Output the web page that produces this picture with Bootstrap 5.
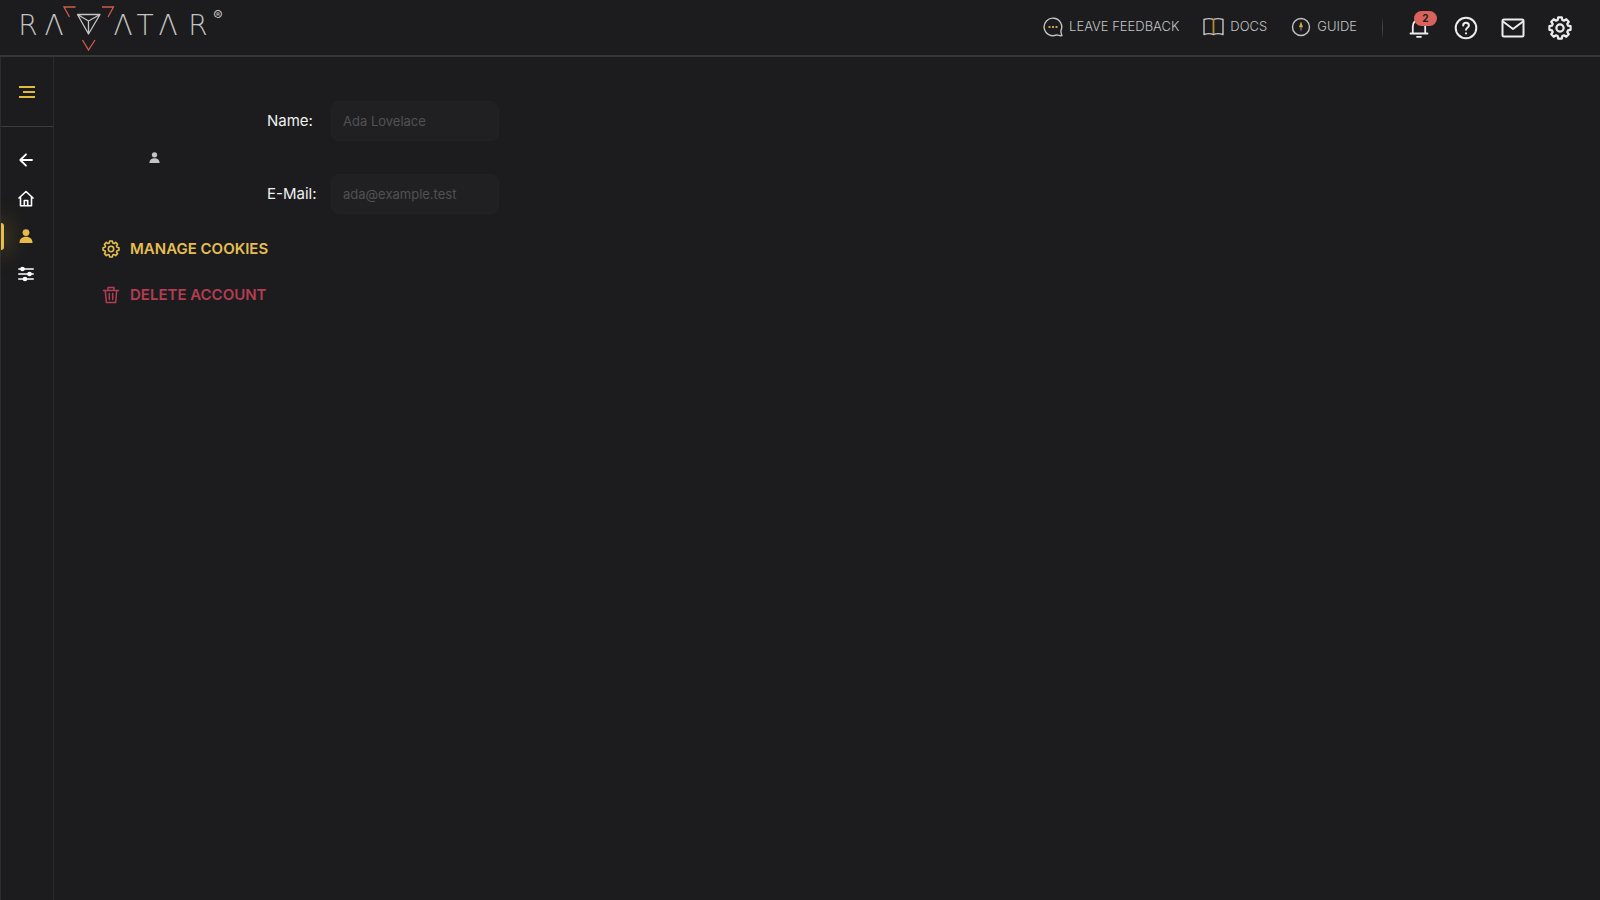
<!DOCTYPE html>
<html lang="en">
<head>
<meta charset="utf-8">
<meta name="viewport" content="width=device-width, initial-scale=1">
<title>Ravatar – Account</title>
<link href="https://cdn.jsdelivr.net/npm/bootstrap@5.3.0/dist/css/bootstrap.min.css" rel="stylesheet">
<style>
  body { background: #1c1c1e; color: #f0f0f0; font-family: Inter, "Liberation Sans", sans-serif; font-size: 15px; }
  svg { display: block; fill: none; stroke: currentColor; flex: none; }
  .topbar { height: 57px; padding: 0 28px 0 16px; border-bottom: 2px solid #373736; }
  .wordmark text { fill: #c4c4c4; stroke: none; font-family: "DejaVu Sans Light", "DejaVu Sans", sans-serif; font-size: 28px; font-weight: 200; text-anchor: middle; }
  .wordmark .reg { font-family: Inter, sans-serif; font-size: 14px; font-weight: 400; }
  .doclink { color: #c4c4c4; font-size: 13px; font-weight: 300; gap: 6px; }
  .docs { gap: 24px; padding-bottom: 2px; }
  .divider { width: 1px; height: 24px; background: linear-gradient(#1c1c1e, #4a4a4a, #1c1c1e); margin: 0 24px 0 25px; }
  .tools { gap: 23px; }
  .tool { color: #ececec; width: 24px; height: 24px; }
  .count { top: -5px; left: 7px; width: 23px; height: 15px; background: #d9625f; color: #222; font-size: 10px; font-weight: 700; line-height: 15px; }
  .rail { width: 54px; border: solid #2c2c2e; border-width: 0 1px; }
  .menu-toggle { height: 70px; border-bottom: 1px solid #3c3c3e !important; color: #e0b93e; }
  .rail-nav { padding-top: 14px; }
  .rail-link { height: 38px; padding-right: 2px; color: #fff; }
  .rail-link.active { color: #e7bd4b; }
  .rail-link.active::before { content: ""; position: absolute; left: 0; top: 6px; width: 3px; height: 27px; border-radius: 0 3px 3px 0; background: #e7bd4b; box-shadow: 0 0 22px 4px #a8862870; }
  .content { padding: 44px 47px; }
  .avatar { width: 107px; color: #c4c4c4; }
  .profile { gap: 59px; }
  .fields { row-gap: 33px; }
  .fields label { width: 64px; }
  .fields .form-control { width: 168px; height: 40px; padding: 0 11px; font-size: 13px; background: #202022; border: 1px solid #222224; border-radius: 8px; }
  .fields .form-control::placeholder { color: #515153; }
  .account-action { height: 30px; gap: 10px; font-size: 15px; font-weight: 600; color: #e5bf52; }
  .account-action.delete { color: #b33d52; }
  .actions { gap: 16px; padding: 20px 0 0 1px; }
</style>
<script src="https://cdn.jsdelivr.net/npm/bootstrap@5.3.0/dist/js/bootstrap.bundle.min.js" defer></script>
</head>
<body class="d-flex flex-column min-vh-100">
<svg width="0" height="0" class="position-absolute" aria-hidden="true">
  <symbol id="gear" viewBox="-12 -12 24 24"><path stroke-linejoin="round" d="M-2.3-8-1.8-10.6H1.8L2.3-8 4.03-7.28 6.22-8.77 8.77-6.22 7.28-4.03 8-2.3 10.6-1.8V1.8L8 2.3 7.28 4.03 8.77 6.22 6.22 8.77 4.03 7.28 2.3 8 1.8 10.6H-1.8L-2.3 8-4.03 7.28-6.22 8.77-8.77 6.22-7.28 4.03-8 2.3-10.6 1.8V-1.8L-8-2.3-7.28-4.03-8.77-6.22-6.22-8.77-4.03-7.28Z"/><circle r="3.6"/></symbol>
  <symbol id="person" viewBox="0 0 14 14"><g fill="currentColor" stroke="none"><circle cx="7" cy="3.6" r="3.4"/><path d="M.5 14C.5 10 3 7.800 7 7.800S13.500 10 13.500 14Z"/></g></symbol>
</svg>

<header class="topbar d-flex align-items-center">
  <a href="#" class="wordmark" aria-label="Ravatar">
    <svg width="210" height="50" viewBox="16 3 210 50">
      <text x="28 54 123 145 168 198" y="35">RΛΛTΛR</text>
      <text class="reg" x="218" y="21">®</text>
      <g stroke="#cf5b4b" stroke-width="1.300"><path d="M75.500 7H64L69.500 17M102 7H113.500L108 17M82.500 40 88.500 50 95 40"/></g>
      <g stroke="#c4c4c4" stroke-width="1.300" stroke-linejoin="round"><path d="M77.500 14.500H100L88.500 34ZM77.500 14.500 88.500 21 100 14.500M88.500 21V34"/></g>
    </svg>
  </a>
  <nav class="docs d-flex align-items-center ms-auto">
    <a href="#" class="doclink d-flex align-items-center text-decoration-none">
      <svg width="20" height="20" viewBox="0 0 20 20" stroke-width="1.400"><path stroke-linejoin="round" d="M13.600 17.900A8.800 8.800 0 1 1 17.900 13.600C17.900 15.500 18.200 17 18.900 18.600 17 18.900 15.300 18.500 13.600 17.900Z"/><path stroke="#c9a43c" stroke-width="2" stroke-dasharray="2 1.500" d="M5.500 10H15"/></svg>
      LEAVE FEEDBACK</a>
    <a href="#" class="doclink d-flex align-items-center text-decoration-none">
      <svg width="21" height="20" viewBox="0 0 21 20" stroke-width="1.400"><path stroke-linejoin="round" d="M10.500 2.500C8 1.500 4 1.500 1 2.500V17.500C4 16.500 8 16.500 10.500 17.500 13 16.500 17 16.500 20 17.500V2.500C17 1.500 13 1.500 10.500 2.500Z"/><path stroke="#b18e33" stroke-width="1.800" d="M10.500 2V17"/></svg>
      DOCS</a>
    <a href="#" class="doclink d-flex align-items-center text-decoration-none">
      <svg width="20" height="20" viewBox="0 0 20 20" stroke-width="1.400"><circle cx="10" cy="10" r="8.500"/><path fill="#d4aa3d" stroke="none" d="M10 4.500 12 10H8Z"/><path fill="#666" stroke="none" d="M10 15 8.500 10H11.500Z"/></svg>
      GUIDE</a>
  </nav>
  <span class="divider"></span>
  <div class="tools d-flex align-items-center">
    <button type="button" class="tool btn p-0 border-0 position-relative" aria-label="Notifications">
      <svg width="24" height="24" viewBox="0 0 24 24" stroke-width="1.800" stroke-linecap="round"><path d="M3.500 17.500H20.500M5.800 17V10.500C5.800 6.500 8.500 4 12 4S18.200 6.500 18.200 10.500V17M10 20.800H14"/></svg>
      <span class="count position-absolute rounded-pill text-center">2</span>
    </button>
    <button type="button" class="tool btn p-0 border-0" aria-label="Help">
      <svg width="24" height="24" viewBox="0 0 24 24" stroke-width="2" stroke-linecap="round"><circle cx="12" cy="12" r="10.300"/><path d="M9.200 9.500C9.200 7.800 10.400 6.800 12 6.800S14.900 7.900 14.900 9.500C14.900 11.600 12 11.800 12 13.800M12 17.300V17.400"/></svg>
    </button>
    <button type="button" class="tool btn p-0 border-0" aria-label="Messages">
      <svg width="24" height="24" viewBox="0 0 24 24" stroke-width="2" stroke-linejoin="round"><rect x="1.500" y="3.500" width="21" height="17" rx="1.500"/><path d="M2 5.500 12 13 22 5.500"/></svg>
    </button>
    <button type="button" class="tool btn p-0 border-0" aria-label="Settings">
      <svg width="24" height="24" stroke-width="2.200"><use href="#gear"/></svg>
    </button>
  </div>
</header>

<div class="d-flex flex-grow-1">
  <aside class="rail flex-shrink-0">
    <button type="button" class="menu-toggle btn w-100 rounded-0 border-0 p-0 d-flex align-items-center justify-content-center" aria-label="Toggle menu">
      <svg width="16" height="14" viewBox="0 0 16 14" stroke-width="1.800"><path d="M0 2H16M4 7H16M0 12H16"/></svg>
    </button>
    <nav class="rail-nav d-flex flex-column">
      <a href="#" class="rail-link d-flex align-items-center justify-content-center" aria-label="Back"><svg width="16" height="16" viewBox="0 0 16 16" stroke-width="1.800" stroke-linecap="round" stroke-linejoin="round"><path d="M14 8H2.500M8 2.300 2.300 8 8 13.700"/></svg></a>
      <a href="#" class="rail-link d-flex align-items-center justify-content-center" aria-label="Home"><svg width="16" height="17" viewBox="0 0 16 17" stroke-width="1.600" stroke-linecap="round" stroke-linejoin="round"><path d="M1 8 8 1.500 15 8M2.500 7V15.800H13.500V7M6.300 15.500V10.500H9.700V15.500"/></svg></a>
      <a href="#" class="rail-link active position-relative d-flex align-items-center justify-content-center" aria-label="Account"><svg width="14" height="14"><use href="#person"/></svg></a>
      <a href="#" class="rail-link d-flex align-items-center justify-content-center" aria-label="Preferences"><svg width="16" height="16" viewBox="0 0 16 16" stroke-width="1.700" stroke-linecap="round"><path d="M.8 3H15.200M.8 8H15.200M.8 13H15.200"/><g fill="currentColor" stroke="none"><circle cx="4.500" cy="3" r="2.300"/><circle cx="11.500" cy="8" r="2.300"/><circle cx="7" cy="13" r="2.300"/></g></svg></a>
    </nav>
  </aside>

  <main class="content flex-grow-1">
    <form class="profile d-flex align-items-center">
      <div class="avatar d-flex justify-content-center" role="img" aria-label="Profile picture"><svg width="11" height="11"><use href="#person"/></svg></div>
      <div class="fields d-flex flex-column">
        <div class="d-flex align-items-center">
          <label for="name">Name:</label>
          <input type="text" class="form-control" id="name" placeholder="Ada Lovelace">
        </div>
        <div class="d-flex align-items-center">
          <label for="email">E-Mail:</label>
          <input type="email" class="form-control" id="email" placeholder="ada@example.test">
        </div>
      </div>
    </form>
    <div class="actions d-flex flex-column align-items-start">
      <button type="button" class="account-action btn border-0 p-0 d-flex align-items-center">
        <svg width="18" height="18" stroke-width="2.100"><use href="#gear"/></svg>
        MANAGE COOKIES</button>
      <button type="button" class="account-action delete btn border-0 p-0 d-flex align-items-center">
        <svg width="18" height="18" viewBox="0 0 18 18" stroke-width="1.500" stroke-linecap="round" stroke-linejoin="round"><path d="M1.500 4.500H16.500M3.300 4.500 4.300 16.500H13.700L14.700 4.500M6 4.500V1.500H12V4.500M7.300 7.500V13.500M10.700 7.500V13.500"/></svg>
        DELETE ACCOUNT</button>
    </div>
  </main>
</div>
</body>
</html>
